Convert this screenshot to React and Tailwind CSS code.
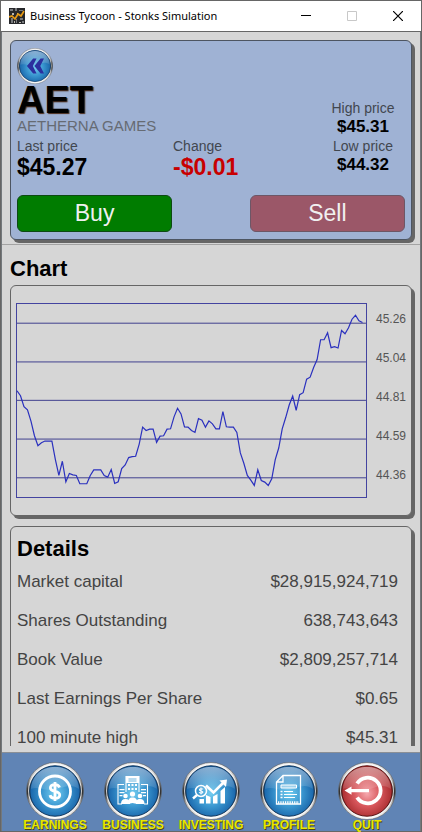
import React from 'react';

const GRID_LINES = [58, 175, 291, 408, 525];
const PRICE_LABELS = ['45.26', '45.04', '44.81', '44.59', '44.36'];

// last 100 ticks, measured down from the top of the plot
const TICKS = [
  262, 277, 310, 320, 354, 398, 428, 419, 414, 414, 414, 470, 518, 475, 537, 512, 516, 518, 543, 543,
  543, 518, 501, 501, 501, 518, 523, 500, 542, 537, 497, 486, 464, 461, 460, 424, 372, 382, 378, 378,
  418, 399, 398, 378, 377, 341, 315, 332, 371, 372, 382, 388, 346, 351, 372, 353, 362, 377, 377, 325,
  371, 372, 372, 388, 450, 481, 518, 532, 548, 501, 533, 538, 548, 528, 470, 435, 377, 343, 305, 278,
  321, 274, 268, 227, 221, 192, 168, 108, 108, 87, 132, 129, 133, 80, 90, 72, 46, 34, 51, 56,
];

const DETAILS = [
  { label: 'Market capital', value: '$28,915,924,719' },
  { label: 'Shares Outstanding', value: '638,743,643' },
  { label: 'Book Value', value: '$2,809,257,714' },
  { label: 'Last Earnings Per Share', value: '$0.65' },
  { label: '100 minute high', value: '$45.31' },
];

function Orb({ id, red = false, className, children }) {
  return (
    <svg viewBox="0 0 58 58" className={className} aria-hidden="true">
      <defs>
        <linearGradient id={`${id}-rim`} x1="0" y1="0" x2="0" y2="1">
          <stop offset="0" stopColor="#f4f4f4" />
          <stop offset="0.25" stopColor="#c4c4c4" />
          <stop offset="0.45" stopColor="#3c3c3c" />
          <stop offset="0.55" stopColor="#2c2c2c" />
          <stop offset="0.72" stopColor="#b8b8b8" />
          <stop offset="1" stopColor="#ffffff" />
        </linearGradient>
        <radialGradient id={`${id}-fill`} cx="0.5" cy="0.55" r="0.52">
          <stop offset="0" stopColor={red ? '#f6a8ae' : '#74cdf0'} />
          <stop offset="0.5" stopColor={red ? '#d8575c' : '#3a97d0'} />
          <stop offset="1" stopColor={red ? '#a52a2c' : '#1660a6'} />
        </radialGradient>
        <linearGradient id={`${id}-gloss`} x1="0" y1="0" x2="0" y2="1">
          <stop offset="0" stopColor="#ffffff" stopOpacity="0.5" />
          <stop offset="1" stopColor="#ffffff" stopOpacity="0.08" />
        </linearGradient>
      </defs>
      <circle cx="29" cy="29" r="28.5" fill={`url(#${id}-rim)`} stroke="#5c5c5c" strokeWidth="0.6" />
      <circle cx="29" cy="29" r="26.4" fill="none" stroke="#ffffff" strokeOpacity="0.75" strokeWidth="1.2" />
      <circle cx="29" cy="29" r="25.2" fill={`url(#${id}-fill)`} stroke={red ? '#5c1414' : '#12385f'} strokeWidth="1" />
      <path d="M5 27C6 13 16 5 29 5s23 8 24 22C44 20 36 27 27 28S12 24 5 27z" fill={`url(#${id}-gloss)`} />
      {children}
    </svg>
  );
}

function EarningsIcon() {
  return (
    <Orb id="earnings" className="size-[58px]">
      <circle cx="29" cy="29.5" r="15.5" fill="none" stroke="#fff" strokeWidth="2.8" />
      <path
        d="M33.5 25.5c-.6-2-2.2-2.8-4.5-2.8-2.7 0-4.6 1.2-4.6 3.3 0 4.7 9.300 2.100 9.300 6.900 0 2.200-2 3.400-4.700 3.400-2.600 0-4.500-1-5-3.200M29 20v19"
        fill="none"
        stroke="#fff"
        strokeWidth="2.8"
      />
    </Orb>
  );
}

function BusinessIcon() {
  return (
    <Orb id="business" className="size-[58px]">
      <g fill="#fff">
        <path d="M22 14h13v7H22z" />
        <path d="M24 22h2v2h-2zM27.5 22h2v2h-2zM31 22h2v2h-2zM24 26h2v2h-2zM27.5 26h2v2h-2zM31 26h2v2h-2z" />
        <path d="M15.5 27h5v1.2h-5zM15.5 30h5v1.2h-5zM15.5 33h3v1.2h-3zM37 27h5v1.2h-5zM37 30h5v1.2h-5zM39 33h3v1.2h-3z" />
        <circle cx="21.5" cy="34" r="2.3" />
        <circle cx="28.5" cy="32" r="2.6" />
        <circle cx="36" cy="34" r="2.3" />
        <path d="M17 42c0-3.5 1.5-5 4.5-5s4.5 1.5 4.5 5zM32 42c0-3.5 1-5 4-5s4.5 1.5 4.5 5z" />
        <path d="M24 42c0-5 1.5-6.5 4.5-6.5S33.5 37 33.5 42l-5-1z" />
      </g>
      <path
        d="M22 30V14.5h13V30M20 22.5h-6V42h4M37 22.5h6.5V42H40"
        fill="none"
        stroke="#fff"
        strokeWidth="1.1"
      />
      <path d="M24.5 17h8M24.5 19h8" stroke="#4ba5d6" strokeWidth="0.8" />
    </Orb>
  );
}

function InvestingIcon() {
  return (
    <Orb id="investing" className="size-[58px]">
      <path d="M17.5 37h4.5v4.500h-4.500zM24 33l4.500 2v6.500H24zM31 34.500l4.500-2.500v9.500H31zM38.500 29l4.500-4v16.500h-4.500z" fill="#fff" />
      <path d="M24 23.5l7.500 7 10-10" fill="none" stroke="#fff" strokeWidth="2.6" />
      <path d="M37.5 18.500l7.500-1-1 7.500z" fill="#fff" />
      <circle cx="19" cy="29" r="5.5" fill="none" stroke="#fff" strokeWidth="1.5" />
      <path d="M15 33l-4 3.5" stroke="#fff" strokeWidth="2.4" />
      <path d="M21 27.300c-.5-.8-3.600-1-3.600.5s3.500.8 3.500 2.200-3.200 1.400-3.800.3M19 25.500v7" fill="none" stroke="#fff" strokeWidth="1.1" />
    </Orb>
  );
}

function ProfileIcon() {
  return (
    <Orb id="profile" className="size-[58px]">
      <path d="M23 13.5h17.500V42H16.500V20zM23 13.500V20h-6.500" fill="none" stroke="#fff" strokeWidth="1.3" />
      <path d="M21 23h15.500v3H21z" fill="#fff" fillOpacity="0.35" stroke="#fff" strokeWidth="1" />
      <path d="M24 29.500h9M24 32.500h13M24 35.500h11" stroke="#fff" strokeWidth="1.2" />
      <path d="M20.500 29.500h2M20.500 32.500h2M20.500 35.500h2" stroke="#fff" strokeWidth="1.6" />
      <path d="M18 40.500h21" stroke="#fff" strokeWidth="2.6" strokeDasharray="1.3 1" />
    </Orb>
  );
}

function QuitIcon() {
  return (
    <Orb id="quit" red className="size-[58px]">
      <path d="M19.100 21.500a12.800 12.800 0 1 1 0 14" fill="none" stroke="#fff" strokeWidth="3.8" />
      <path d="M31 26.900v3.400H13.500v2.500L6.500 28.600l7-4.200v2.500z" fill="#fff" />
    </Orb>
  );
}

const NAV_ITEMS = [
  { label: 'EARNINGS', Icon: EarningsIcon },
  { label: 'BUSINESS', Icon: BusinessIcon },
  { label: 'INVESTING', Icon: InvestingIcon },
  { label: 'PROFILE', Icon: ProfileIcon },
  { label: 'QUIT', Icon: QuitIcon },
];

function TitleBar() {
  return (
    <header className="flex h-[31px] shrink-0 items-center border-b border-[#666666] bg-white pl-2 font-['Noto_Sans','Open_Sans',sans-serif]">
      <svg viewBox="0 0 16 16" className="size-4" aria-hidden="true">
        <path d="M0 0h16v16H0z" fill="#26272a" />
        <path d="M1 1h3v2H1zM6 0h2v3H6zM10 2h4v1h-4zM2 10h2v5H2zM7 11h1v4H7zM11 10h3v2h-3zM13 13h2v2h-2z" fill="#77797c" />
        <path d="M3 5h2v2H3zM8 5h1v2H8zM5 13h1v2H5zM10 14h2v1h-2z" fill="#b9b5ac" />
        <path d="M0 9l3-1 3 3 3-5 3 2 3-5" fill="none" stroke="#e79a15" strokeWidth="1.7" />
      </svg>
      <h1 className="ml-[5px] flex-1 whitespace-nowrap text-[11px] leading-4 text-black">
        Business Tycoon - Stonks Simulation
      </h1>
      <button type="button" aria-label="Minimize" className="flex h-[30px] w-[46px] items-center justify-center">
        <svg viewBox="0 0 10 10" className="size-[10px]"><path d="M0 4.500h10" stroke="#000" /></svg>
      </button>
      <button type="button" aria-label="Maximize" disabled className="flex h-[30px] w-[46px] items-center justify-center">
        <svg viewBox="0 0 10 10" className="size-[10px]"><path d="M.5.5h9v9h-9z" fill="none" stroke="#c8c8c8" /></svg>
      </button>
      <button type="button" aria-label="Close" className="flex h-[30px] w-[46px] items-center justify-center">
        <svg viewBox="0 0 10 10" className="size-[10px]"><path d="M0 0l10 10M10 0L0 10" stroke="#000" strokeWidth="1.2" /></svg>
      </button>
    </header>
  );
}

function QuoteCard() {
  return (
    <section className="border-b border-[#a3a3a3] px-2 pt-2 pb-1">
      <div className="rounded-md border border-[#4d5561] bg-[#9fb2d4] px-[6px] py-[7px] shadow-[3px_3px_0_#666666]">
        <button type="button" aria-label="Back" className="block">
          <Orb id="back" className="size-9">
            <path d="M26 17l-10 12 10 12h5.500l-6-12 6-12zM38 17L28 29l10 12h5.500l-6-12 6-12z" fill="#2c2f9e" />
          </Orb>
        </button>
        <div className="flex items-end">
          <div className="flex-1">
            <h2 className="text-[38px] leading-8 font-bold text-black [text-shadow:1px_1px_1px_#4a2a18]">AET</h2>
            <p className="text-[15px] leading-5 text-[#666b73]">AETHERNA GAMES</p>
            <div className="grid grid-cols-2 gap-x-2">
              <div>
                <p className="text-sm leading-5 text-[#42474f]">Last price</p>
                <p className="text-[23px] leading-[23px] font-bold text-black">$45.27</p>
              </div>
              <div>
                <p className="text-sm leading-5 text-[#42474f]">Change</p>
                <p className="text-[23px] leading-[23px] font-bold text-[#c80000]">-$0.01</p>
              </div>
            </div>
          </div>
          <div className="w-[84px] pb-[5px] text-center">
            <p className="text-sm leading-5 text-[#42474f]">High price</p>
            <p className="text-[17px] leading-[18px] font-bold text-black">$45.31</p>
            <p className="text-sm leading-5 text-[#42474f]">Low price</p>
            <p className="text-[17px] leading-[18px] font-bold text-black">$44.32</p>
          </div>
        </div>
        <div className="mt-4 grid grid-cols-[2fr_1fr_2fr] text-[23px] leading-[35px] text-[#f0f0f0]">
          <button type="button" className="rounded-md border border-[#0d4a12] bg-[#007c00]">Buy</button>
          <button type="button" className="col-start-3 rounded-md border border-[#6d5666] bg-[#9b5768]">Sell</button>
        </div>
      </div>
    </section>
  );
}

function PriceChart() {
  const line = TICKS.map((y, i) => `${i * 10.5},${y}`).join(' ');

  return (
    <div className="flex rounded-md border border-[#666666] bg-[#d6d6d6] px-[5px] pt-[14px] pb-[17px] shadow-[3px_3px_0_#666666]">
      <svg
        viewBox="0 0 1050 583"
        preserveAspectRatio="none"
        role="img"
        aria-label="AET price history"
        className="mt-[3px] h-[195px] min-w-0 flex-1 border border-[#4444a0]"
      >
        {GRID_LINES.map((y) => (
          <path key={y} d={`M0 ${y}h1050`} stroke="#40408f" vectorEffect="non-scaling-stroke" shapeRendering="crispEdges" />
        ))}
        <polyline points={line} fill="none" stroke="#2a30be" strokeWidth="1.2" vectorEffect="non-scaling-stroke" />
      </svg>
      <ul className="pl-[9px] text-xs leading-[39px] text-[#555555]">
        {PRICE_LABELS.map((label) => (
          <li key={label} className="h-[39px]">{label}</li>
        ))}
      </ul>
    </div>
  );
}

function DetailsCard() {
  return (
    <div className="rounded-md border border-[#666666] bg-[#d6d6d6] pt-[9px] pr-[13px] pb-2 pl-[6px] shadow-[3px_3px_0_#666666]">
      <h2 className="text-[22px] leading-[26px] font-bold text-black">Details</h2>
      <table className="w-full text-[17px] text-[#444444]">
        <tbody>
          {DETAILS.map((row) => (
            <tr key={row.label} className="h-[39px]">
              <th scope="row" className="p-0 text-left font-normal">{row.label}</th>
              <td className="p-0 text-right">{row.value}</td>
            </tr>
          ))}
        </tbody>
      </table>
    </div>
  );
}

export default function App() {
  return (
    <div className="flex h-screen flex-col border border-[#666666] bg-[#d6d6d6] font-['Liberation_Sans',Arial,sans-serif]">
      <TitleBar />
      <div className="flex min-h-0 flex-1 flex-col border-x border-[#73787c]">
        <main className="mb-[6px] min-h-0 flex-1 overflow-hidden">
          <QuoteCard />
          <section className="px-2 pt-3">
            <h2 className="mb-1 text-[22px] leading-6 font-bold text-black">Chart</h2>
            <PriceChart />
          </section>
          <section className="px-2 pt-[10px]">
            <DetailsCard />
          </section>
        </main>
        <nav className="grid shrink-0 grid-cols-5 border-t border-[#8a8f96] bg-[#6084b5] px-[14px] pt-[9px]">
          {NAV_ITEMS.map(({ label, Icon }) => (
            <button key={label} type="button" className="flex flex-col items-center">
              <Icon />
              <span className="text-xs leading-[11px] font-bold text-[#e8e800] [text-shadow:1px_1px_0_#4a4a10]">
                {label}
              </span>
            </button>
          ))}
        </nav>
      </div>
    </div>
  );
}
